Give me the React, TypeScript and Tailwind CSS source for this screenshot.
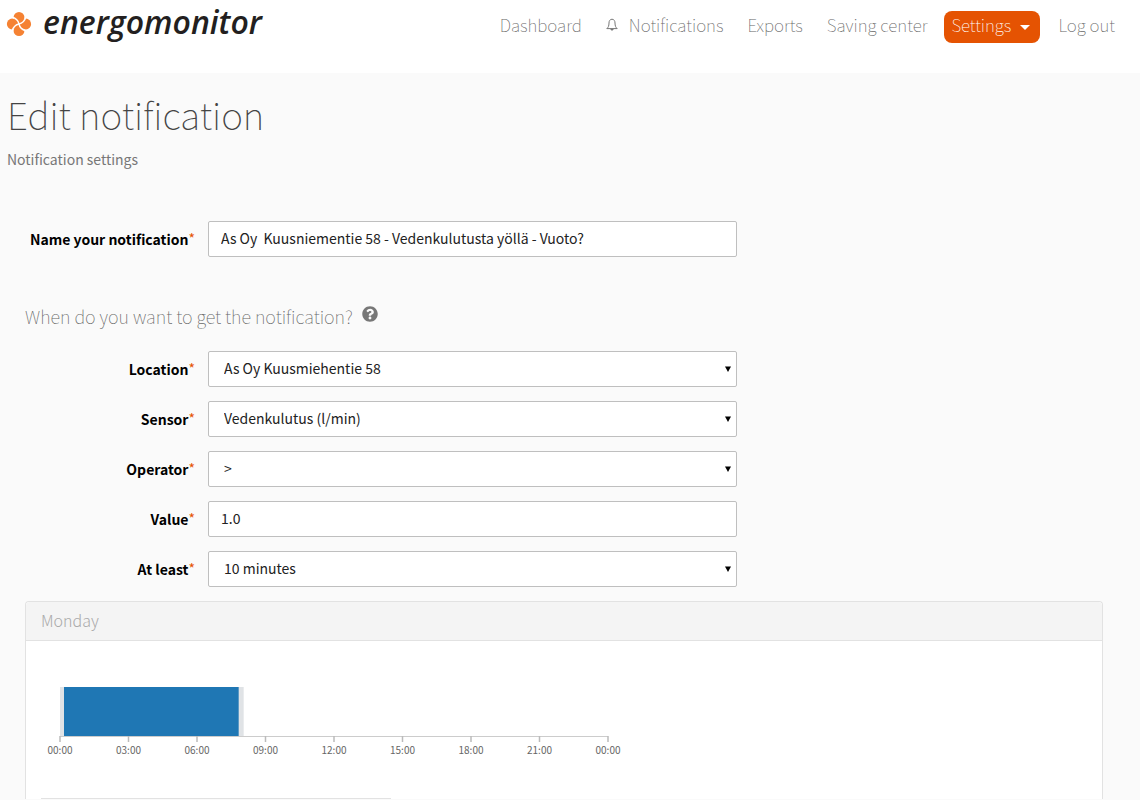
import type { ReactNode } from 'react';
import { FaQuestionCircle } from 'react-icons/fa';

const hours = ['00:00', '03:00', '06:00', '09:00', '12:00', '15:00', '18:00', '21:00', '00:00'];
const AXIS_LEFT = 19;
const AXIS_WIDTH = 548;

function Logo() {
  const angles = [0, 90, 180, 270];

  return (
    <a href="#" className="flex items-center gap-[11px]">
      <svg width="26" height="26" viewBox="-13 -13 26 26" aria-hidden="true">
        <rect x="-4" y="-4" width="8" height="8" fill="#f58233" />
        {angles.map((angle) => (
          <ellipse key={angle} transform={`rotate(${angle})`} cy="-6.9" rx="5.4" ry="5.2" fill="#f58233" />
        ))}
        {angles.map((angle) => (
          <path
            key={angle}
            transform={`rotate(${angle})`}
            d="M0 0 Q-1 -5 -7 -7"
            fill="none"
            stroke="#fff"
            strokeWidth="1.4"
          />
        ))}
      </svg>
      <span className="pb-1 font-['Open_Sans','Noto_Sans',sans-serif] text-[32px] leading-[40px] font-semibold text-[#231f20] italic">
        energomonitor
      </span>
    </a>
  );
}

function BellIcon() {
  return (
    <svg width="12" height="14" viewBox="0 0 12 14" fill="none" stroke="#777" aria-hidden="true">
      <path d="M6 1.2 C3.8 1.4 3 3 3 5 C3 8 2.2 9.4 0.8 10.6 H11.2 C9.8 9.4 9 8 9 5 C9 3 8.2 1.4 6 1.2 Z" />
      <path d="M4.8 11 C4.9 12.6 7.1 12.6 7.2 11" fill="#777" />
    </svg>
  );
}

function Row({ id, label, children }: { id: string; label: string; children: ReactNode }) {
  return (
    <div className="flex items-center gap-[13px]">
      <label htmlFor={id} className="flex w-[170px] shrink-0 justify-end font-bold text-black">
        {label}
        <span className="text-[14px] leading-[18px] font-normal text-[#e55302]">*</span>
      </label>
      <div className="relative max-w-[529px] flex-1">{children}</div>
    </div>
  );
}

const control =
  'block h-[36px] w-full rounded-[2px] border border-[#bfbfbf] bg-white pr-3 pb-0.5 text-[#222]';

function TextField({ id, label, value }: { id: string; label: string; value: string }) {
  return (
    <Row id={id} label={label}>
      <input id={id} type="text" defaultValue={value} className={`${control} pl-3`} />
    </Row>
  );
}

function SelectField({ id, label, value }: { id: string; label: string; value: string }) {
  return (
    <Row id={id} label={label}>
      <select id={id} defaultValue={value} className={`${control} appearance-none pl-[15px]`}>
        <option>{value}</option>
      </select>
      <svg
        className="pointer-events-none absolute top-[15px] right-[6px]"
        width="6"
        height="6"
        viewBox="0 0 6 6"
        aria-hidden="true"
      >
        <path d="M0 0.5 H6 L3 6 Z" fill="#000" />
      </svg>
    </Row>
  );
}

function DayChart() {
  const tick = AXIS_WIDTH / (hours.length - 1);
  const x = (hour: number) => AXIS_LEFT + (hour / 3) * tick;

  return (
    <svg width="600" height="72" viewBox="0 0 600 72" className="block">
      <rect x={x(0)} y="0" width={x(8) - x(0) + 1} height="49" fill="#e0e3e6" />
      <rect x={x(0) + 4} y="0" width={x(8) - x(0) - 8} height="49" fill="#1f77b4" />
      <path d={`M${AXIS_LEFT} 49.5 H${AXIS_LEFT + AXIS_WIDTH}`} stroke="#ccc" />
      {hours.map((hour, i) => (
        <g key={i}>
          <path d={`M${AXIS_LEFT + i * tick} 49 v6`} stroke="#bbb" strokeWidth="1.5" />
          <text x={AXIS_LEFT + i * tick} y="67" textAnchor="middle" fontSize="10" fill="#666">
            {hour}
          </text>
        </g>
      ))}
    </svg>
  );
}

export default function App() {
  return (
    <div className="min-h-screen bg-[#fafafa] font-['Noto_Sans_CJK_SC',sans-serif] text-[14px] leading-[20px] text-[#777]">
      <header className="flex h-[73px] items-start justify-between bg-white pr-[25px] pl-[6px]">
        <div className="pt-0.5">
          <Logo />
        </div>
        <nav className="flex items-center gap-6 pt-[11px] text-[17px] leading-[28px] font-thin text-[#666]">
          <a href="#" className="pb-1">Dashboard</a>
          <a href="#" className="flex items-center gap-[11px] pb-1">
            <BellIcon />
            Notifications
          </a>
          <a href="#" className="pb-1">Exports</a>
          <a href="#" className="pb-1">Saving center</a>
          <div className="flex items-center gap-[18px]">
            <button className="-ml-[7px] flex items-center gap-[9px] rounded-lg bg-[#e55302] pr-[10px] pb-1 pl-[7px] text-white">
              Settings
              <svg className="mt-1" width="10" height="5" viewBox="0 0 10 5" fill="#fff" aria-hidden="true">
                <path d="M0 0 H10 L5 5 Z" />
              </svg>
            </button>
            <a href="#" className="pb-1">Log out</a>
          </div>
        </nav>
      </header>

      <main className="px-[7px] pt-[15px]">
        <h1 className="text-[37px] leading-[52px] font-thin text-[#444]">Edit notification</h1>
        <p className="mt-[9px]">Notification settings</p>

        <form className="pr-[30px] pl-[18px]">
          <div className="mt-[52px]">
            <TextField
              id="name"
              label="Name your notification"
              value="As Oy  Kuusniementie 58 - Vedenkulutusta yöllä - Vuoto?"
            />
          </div>

          <h2 className="mt-[46px] mb-[22px] flex items-center gap-[9px] text-[18px] leading-[26px] font-thin text-[#666]">
            When do you want to get the notification?
            <FaQuestionCircle size={16} className="mb-1 text-[#777]" />
          </h2>

          <div className="flex flex-col gap-[14px]">
            <SelectField id="location" label="Location" value="As Oy Kuusmiehentie 58" />
            <SelectField id="sensor" label="Sensor" value="Vedenkulutus (l/min)" />
            <SelectField id="operator" label="Operator" value=">" />
            <TextField id="value" label="Value" value="1.0" />
            <SelectField id="duration" label="At least" value="10 minutes" />
          </div>

          <section className="mt-[14px] rounded-t border border-b-0 border-[#e2e2e2] bg-white">
            <h3 className="rounded-t border-b border-[#e2e2e2] bg-[#f4f4f4] px-[15px] pb-0.5 text-[16px] leading-[36px] font-light text-[#aaa]">
              Monday
            </h3>
            <div className="px-[15px] pt-[46px]">
              <DayChart />
              <hr className="mt-[39px] w-[350px] border-[#e2e2e2]" />
            </div>
          </section>
        </form>
      </main>
    </div>
  );
}
